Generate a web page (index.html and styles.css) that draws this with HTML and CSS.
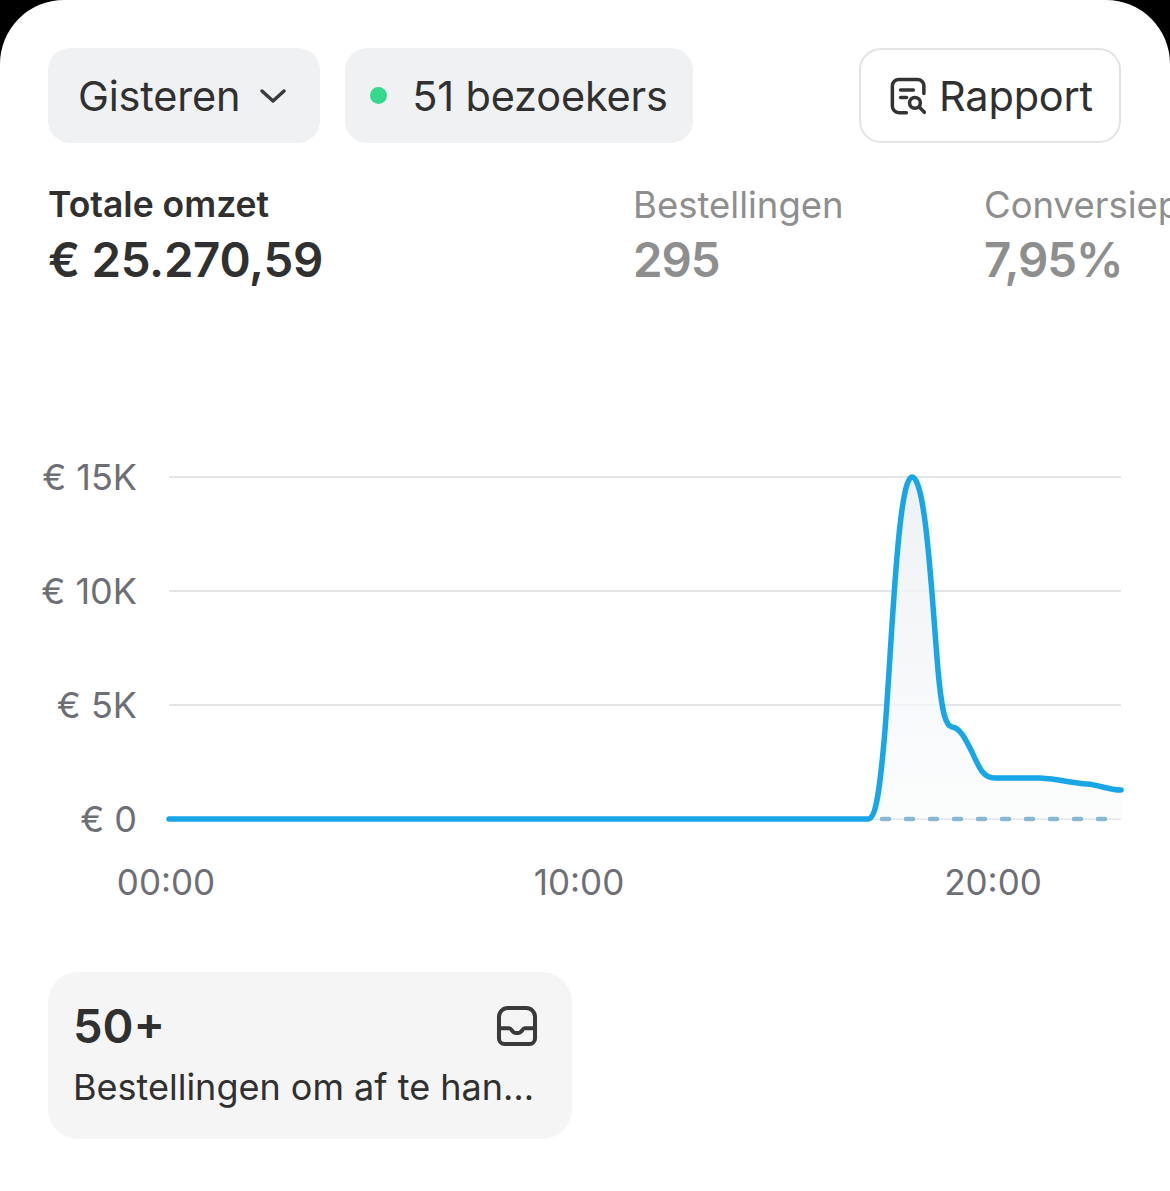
FILE: index.html
```html
<!DOCTYPE html>
<html lang="nl">
<head>
<meta charset="utf-8">
<title>Dashboard</title>
<link rel="stylesheet" href="styles.css">
</head>
<body>
<main class="card">
  <div class="toolbar">
    <button class="chip">
      <span class="chip-text">Gisteren</span>
      <svg class="chevron" viewBox="0 0 26 14" width="26" height="14"><path d="M2 2l11 10L24 2" fill="none" stroke="#3a3a3c" stroke-width="3.4" stroke-linecap="round" stroke-linejoin="round"/></svg>
    </button>
    <div class="chip chip-visitors">
      <span class="dot"></span>
      <span class="chip-text">51 bezoekers</span>
    </div>
    <button class="btn-outline">
      <svg class="report-icon" viewBox="0 0 24 24" width="42" height="42" fill="none" stroke="#333" stroke-width="2" stroke-linecap="round" stroke-linejoin="round">
        <path d="M10.5 21.5H6.2A3.7 3.7 0 0 1 2.5 17.8V6.2A3.7 3.7 0 0 1 6.2 2.5h10.6a3.7 3.7 0 0 1 3.7 3.7v4.3"/>
        <path d="M7.2 8.6h7.3"/>
        <path d="M7.2 12.8h3.4"/>
        <circle cx="15.4" cy="15.9" r="3.1"/>
        <path d="M17.8 18.3l3 3"/>
      </svg>
      <span class="chip-text">Rapport</span>
    </button>
  </div>

  <div class="stats">
    <div class="stat stat-main">
      <div class="stat-label">Totale omzet</div>
      <div class="stat-value">€ 25.270,59</div>
    </div>
    <div class="stat stat-muted">
      <div class="stat-label">Bestellingen</div>
      <div class="stat-value">295</div>
    </div>
    <div class="stat stat-muted">
      <div class="stat-label">Conversiepercentage</div>
      <div class="stat-value">7,95%</div>
    </div>
  </div>

  <svg class="chart" viewBox="48 440 1074 470" width="1074" height="470">
    <defs>
      <linearGradient id="area" x1="0" y1="0" x2="0" y2="1">
        <stop offset="0" stop-color="#eef1f4"/>
        <stop offset="1" stop-color="#f9fafb" stop-opacity="0.6"/>
      </linearGradient>
    </defs>
    <g class="grid">
      <line x1="169" y1="477" x2="1121" y2="477"/>
      <line x1="169" y1="591" x2="1121" y2="591"/>
      <line x1="169" y1="705" x2="1121" y2="705"/>
      <line x1="169" y1="819" x2="1121" y2="819"/>
    </g>
    <g class="ylabels">
      <text x="137" y="477">€ 15K</text>
      <text x="137" y="591">€ 10K</text>
      <text x="137" y="705">€ 5K</text>
      <text x="137" y="819">€ 0</text>
    </g>
    <g class="xlabels">
      <text x="166" y="882">00:00</text>
      <text x="579" y="882">10:00</text>
      <text x="993" y="882">20:00</text>
    </g>
    <path class="area" d="M868 819 C876 819 880 790 885 730 C892 640 898 477 912 477 C926 477 932 600 938 670 C942 715 946 726 952 727 C960 728 965 738 972 752 C980 770 984 778 995 778 L1040 778 C1060 779 1070 783 1087 784 C1100 785 1108 790 1121 790 L1121 819 Z"/>
    <path class="dashed" d="M878 819 L1121 819"/>
    <path class="line" d="M169 819 L868 819 C876 819 880 790 885 730 C892 640 898 477 912 477 C926 477 932 600 938 670 C942 715 946 726 952 727 C960 728 965 738 972 752 C980 770 984 778 995 778 L1040 778 C1060 779 1070 783 1087 784 C1100 785 1108 790 1121 790"/>
  </svg>

  <div class="todo-card">
    <div class="todo-top">
      <span class="todo-count">50+</span>
      <svg class="inbox-icon" viewBox="0 0 24 24" width="46" height="46" fill="none" stroke="#3a3a3c" stroke-width="2.1" stroke-linecap="round" stroke-linejoin="round">
        <path d="M7.2 2.6h9.6a4.6 4.6 0 0 1 4.6 4.6v11.3a2.9 2.9 0 0 1-2.9 2.9H5.5a2.9 2.9 0 0 1-2.9-2.9V7.2A4.6 4.6 0 0 1 7.2 2.6z"/>
        <path d="M2.6 13.2h5.3c1.3 0 1.7 2.4 3.2 2.4h1.8c1.5 0 1.9-2.4 3.2-2.4h5.3"/>
      </svg>
    </div>
    <div class="todo-label">Bestellingen om af te handelen</div>
  </div>
</main>
</body>
</html>
```

FILE: styles.css
```css
* { box-sizing: border-box; }

html, body {
  margin: 0;
  padding: 0;
  background: #000;
}

body {
  font-family: "Inter", "Noto Sans", sans-serif;
  color: #303030;
}

.card {
  background: #fff;
  min-height: 1191px;
  border-radius: 64px 64px 0 0;
  padding: 48px 49px 0 48px;
  overflow: hidden;
}

.toolbar {
  display: flex;
  align-items: center;
  gap: 25px;
}

.chip {
  height: 95px;
  display: flex;
  align-items: center;
  gap: 20px;
  padding: 0 34px 0 30px;
  border: none;
  border-radius: 22px;
  background: #f0f1f3;
  font: inherit;
  color: inherit;
}

.chip-text {
  font-size: 41.5px;
  font-weight: 400;
  color: #303030;
  letter-spacing: -0.2px;
}

.chevron { display: block; }

.chip-visitors {
  gap: 25px;
  padding: 0 25px 0 25px;
}

.dot {
  width: 17px;
  height: 17px;
  border-radius: 50%;
  background: #35d98b;
}

.btn-outline {
  margin-left: auto;
  height: 95px;
  display: flex;
  align-items: center;
  gap: 9px;
  padding: 0 26px 0 27px;
  border: 2px solid #e3e3e5;
  border-radius: 22px;
  background: #fff;
  font: inherit;
}

.report-icon { display: block; }

.stats {
  display: flex;
  margin-top: 40px;
  margin-right: -49px;
  overflow: hidden;
  white-space: nowrap;
}

.stat { flex-shrink: 0; }
.stat-main { width: 585px; }
.stat-muted { width: 351px; }

.stat-label {
  font-size: 36.5px;
  line-height: 44px;
  font-weight: 400;
}

.stat-main .stat-label {
  font-size: 35.5px;
  font-weight: 600;
}

.stat-value {
  font-size: 47.4px;
  line-height: 66px;
  font-weight: 600;
  letter-spacing: -0.3px;
}

.stat-muted { color: #8e8e8e; }
.stat-muted .stat-value { letter-spacing: -1px; }

.chart {
  display: block;
  margin-top: 147px;
  overflow: visible;
}

.grid line {
  stroke: #e4e4e7;
  stroke-width: 2;
}

.ylabels text {
  font-family: "Inter", "Noto Sans", sans-serif;
  font-size: 36px;
  fill: #6e6e76;
  text-anchor: end;
  dominant-baseline: central;
}

.xlabels text {
  font-family: "Inter", "Noto Sans", sans-serif;
  font-size: 35px;
  fill: #6e6e76;
  text-anchor: middle;
  dominant-baseline: central;
}

.area { fill: url(#area); }

.line {
  fill: none;
  stroke: #19a6e6;
  stroke-width: 5.5;
  stroke-linecap: round;
  stroke-linejoin: round;
}

.dashed {
  fill: none;
  stroke: #88b7d3;
  stroke-width: 4.5;
  stroke-linecap: round;
  stroke-dasharray: 7 17;
  stroke-dashoffset: -4;
}

.todo-card {
  margin-top: 62px;
  width: 524px;
  height: 167px;
  background: #f5f5f5;
  border-radius: 30px;
  padding: 26px 32px 0 25px;
}

.todo-top {
  display: flex;
  justify-content: space-between;
  align-items: center;
}

.todo-count {
  font-size: 47px;
  line-height: 56px;
  font-weight: 600;
}

.inbox-icon { display: block; }

.todo-label {
  margin-top: 11px;
  font-size: 36px;
  line-height: 44px;
  white-space: nowrap;
  overflow: hidden;
  text-overflow: ellipsis;
}
```
